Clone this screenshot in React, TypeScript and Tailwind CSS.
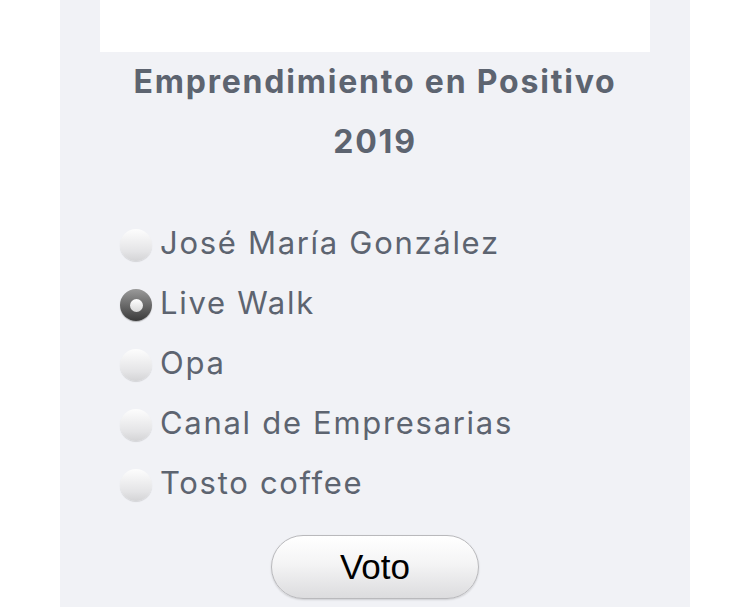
import { useState } from 'react';

const OPTIONS = ['José María González', 'Live Walk', 'Opa', 'Canal de Empresarias', 'Tosto coffee'];

function Radio({ checked }: { checked: boolean }) {
  if (checked) {
    return (
      <span className="w-[32px] h-[32px] rounded-full shrink-0 flex items-center justify-center bg-[linear-gradient(180deg,#9a9a9a_0%,#3a3a3a_100%)] shadow-[0_1px_1px_rgba(0,0,0,0.25)]">
        <span className="w-[13px] h-[13px] rounded-full bg-[linear-gradient(180deg,#ffffff_0%,#d8d8d8_100%)]" />
      </span>
    );
  }
  return (
    <span className="w-[32px] h-[32px] rounded-full shrink-0 bg-[linear-gradient(180deg,#fdfdfd_0%,#e4e4e6_70%,#d4d4d6_100%)] shadow-[0_1px_1px_rgba(0,0,0,0.12)]" />
  );
}

export default function App() {
  const [selected, setSelected] = useState(1);

  return (
    <div className="w-[750px] h-[607px] bg-white flex justify-center overflow-hidden">
      <div className="w-[630px] bg-[#f1f2f6] flex flex-col items-center">
        <div className="w-[550px] h-[52px] bg-white shrink-0" />
        <h2 className="mt-0 text-center text-[32px] leading-[60px] font-bold tracking-[1.8px] text-[#5d6470] font-['Inter',sans-serif]">
          Emprendimiento en Positivo
          <br />
          2019
        </h2>
        <div className="self-stretch pl-[60px] mt-[43px] flex flex-col">
          {OPTIONS.map((opt, i) => (
            <label
              key={opt}
              onClick={() => setSelected(i)}
              className="h-[60px] flex items-center gap-[8px] cursor-pointer"
            >
              <Radio checked={selected === i} />
              <span className="text-[31px] tracking-[1.7px] text-[#5d6470] font-['Inter',sans-serif] -mt-[3px]">
                {opt}
              </span>
            </label>
          ))}
        </div>
        <button className="mt-[20px] w-[208px] h-[64px] rounded-full border border-[#b9b9bc] bg-[linear-gradient(180deg,#ffffff_0%,#f4f4f5_45%,#dcdcde_100%)] shadow-[0_1px_2px_rgba(0,0,0,0.15)] text-[35px] text-black font-['Liberation_Sans',Arial,sans-serif]">
          Voto
        </button>
      </div>
    </div>
  );
}
